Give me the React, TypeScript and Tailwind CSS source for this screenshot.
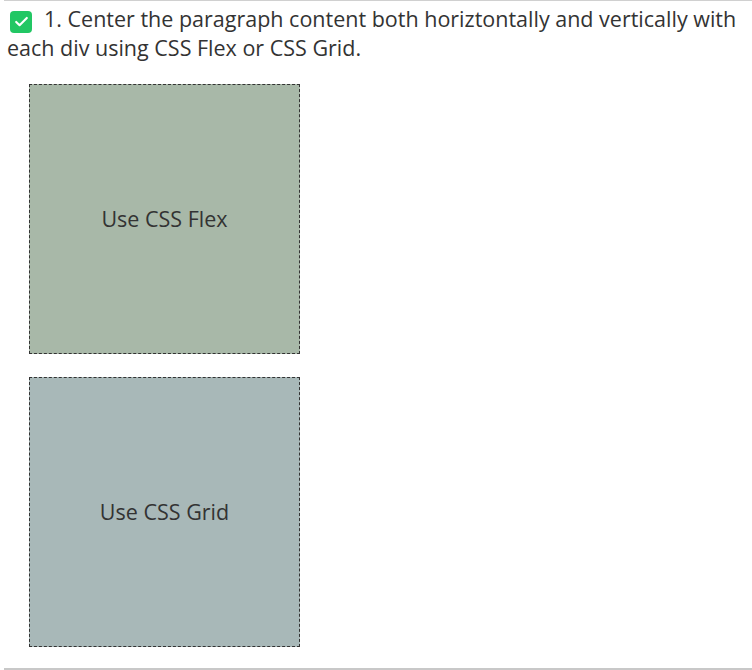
export default function App() {
  return (
    <main className="min-h-[670px] w-[752px] bg-white font-['Open_Sans',sans-serif] text-[#333]">
      <div className="ml-1 border-t border-[#d0d0d0]">
        <p className="px-[3px] pt-[3px] text-[21.5px] leading-[29px]">
          <span className="ml-[3px] mr-[12px] inline-flex h-[22px] w-[22px] translate-y-[3px] items-center justify-center rounded-[4px] bg-[#22c764] align-baseline">
            <svg viewBox="0 0 16 16" className="h-[17px] w-[17px]" fill="none" stroke="white" strokeWidth="2" strokeLinecap="round" strokeLinejoin="round">
              <path d="M3 8.4l3.2 3.1 6.8-6.8" />
            </svg>
          </span>
          1. Center the paragraph content both horiztontally and vertically with each div using CSS Flex or CSS Grid.
        </p>
        <div className="flex flex-col gap-[23px] pl-[25px] pt-[22px]">
          <div className="flex h-[270px] w-[271px] items-center justify-center border border-dashed border-[#333] bg-[#a8b8a8]">
            <p className="text-[21.5px]">Use CSS Flex</p>
          </div>
          <div className="grid h-[270px] w-[271px] place-items-center border border-dashed border-[#333] bg-[#a8b8b8]">
            <p className="text-[21.5px]">Use CSS Grid</p>
          </div>
        </div>
        <div className="mt-[21px] border-t-2 border-[#c8c8c8]" />
      </div>
    </main>
  );
}
